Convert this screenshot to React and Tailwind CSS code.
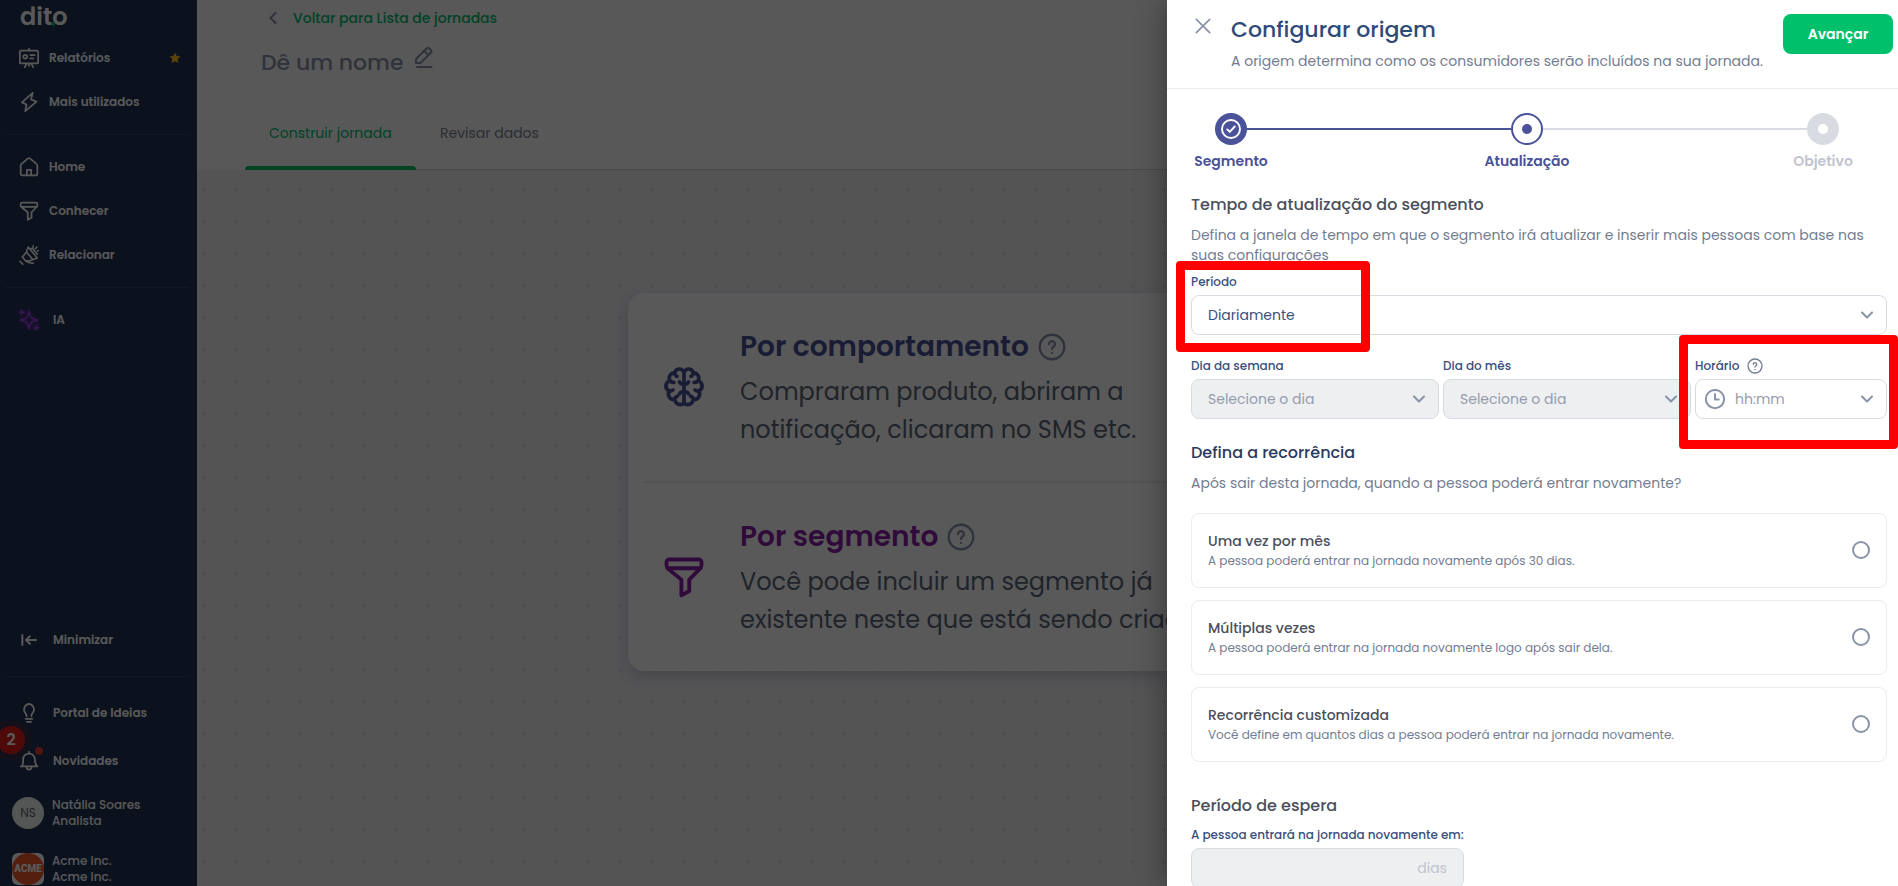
import React from 'react';
import { ChevronDown, ChevronLeft } from 'lucide-react';

const Icon = ({ children, className = 'size-5', strokeWidth = 2.1 }) => (
    <svg
        viewBox="0 0 24 24"
        className={className}
        fill="none"
        stroke="currentColor"
        strokeWidth={strokeWidth}
        strokeLinecap="round"
        strokeLinejoin="round"
        aria-hidden="true"
    >
        {children}
    </svg>
);

const BoardIcon = () => (
    <Icon>
        <rect x="1" y="3" width="22" height="15.500" rx="1.5" />
        <path d="M12 1v2M9 19l-2 4M15 19l2 4M12 19v2.500M13.500 8.500H19M13.500 12.500H17" />
        <circle cx="7.500" cy="10.500" r="2.300" />
    </Icon>
);

const BoltIcon = () => (
    <Icon>
        <path d="M16.500 1 3.500 12.500 9 15 7.500 23 21 11.500 14.500 9l2-8Z" />
    </Icon>
);

const HomeIcon = () => (
    <Icon>
        <path d="M2 10.500c0-1 .4-1.700 1.100-2.300l7.400-6.300c.9-.7 2.100-.7 3 0l7.400 6.300c.7.600 1.100 1.300 1.100 2.300V20a2 2 0 0 1-2 2H4a2 2 0 0 1-2-2v-9.500Z" />
        <path d="M9.500 21.500v-6h5v6" />
    </Icon>
);

const FunnelIcon = ({ className, strokeWidth }) => (
    <Icon className={className} strokeWidth={strokeWidth}>
        <path d="M3.500 2h17A1.500 1.500 0 0 1 22 3.500V5c0 1-.4 1.800-1.100 2.500L15 13.500V20l-4.500 2.500v-9L3.100 7.500C2.400 6.800 2 6 2 5V3.500A1.500 1.500 0 0 1 3.500 2ZM2.500 7h19" />
    </Icon>
);

const MegaphoneIcon = () => (
    <Icon strokeWidth={1.9}>
        <path d="M11 2.500 22 15.500M11 2.500 9 8.500 4 14.500 7.500 18.500l5.500.5 9-3.500M9 8.500l7.500 9M14 4.500l2-.5 6 7M1 19.500 4.500 23M8 19l3.500 2 5.500 1M17 1v1.500M19.500 4.500 21.500 2.500M22 7h1" />
    </Icon>
);

const SparkleIcon = () => (
    <Icon className="-ml-px size-[22px] text-[#9a45dd] drop-shadow-[0_0_2px_#a020f0]" strokeWidth={1.6}>
        <path d="M12 2.500c1 6.200 3 8.500 9.500 9.500-6.500 1-8.500 3.300-9.500 9.500-1-6.200-3-8.500-9.500-9.500C9 11 11 8.700 12 2.500ZM4 1v5M1.500 3.500h5M20 18v5M17.500 20.500h5" />
    </Icon>
);

const CollapseIcon = () => (
    <Icon strokeWidth={2.4}>
        <path d="M4 6v12M20.500 12H9M13 7.500 8.500 12l4.500 4.500" />
    </Icon>
);

const BulbIcon = () => (
    <Icon>
        <path d="M9 16v-1.500c0-1-.6-1.700-1.500-2.700A6.800 6.800 0 0 1 12 1a6.800 6.800 0 0 1 4.500 10.800c-.9 1-1.500 1.700-1.500 2.700V16M8 19h8M9.500 22.500h5" />
    </Icon>
);

const BellIcon = () => (
    <Icon>
        <path d="M4 17c1-1.500 1-3 1-7a7 7 0 0 1 14 0c0 4 .5 6 3 8.500H2M9 19c0 4.500 6 4.500 6 0M12 1v2" />
    </Icon>
);

const BrainIcon = () => (
    <Icon className="size-11" strokeWidth={2}>
        <path d="M12 4v16.500M12 4C11 1.500 7.500 1.500 7 4.300 4.500 4.300 3.300 6.500 4.300 8.500 1.500 9.800 1.500 12.800 3.700 14c-.8 3 .6 4.800 3.300 5 .6 2.800 4 3.300 5 1.500M7 4.300c0 1 .4 1.500 1.200 1.900M4.300 8.500c.6.800 1.300 1.100 2.200 1M3.700 14c.8.400 1.600.2 2.300-.4M7 19c0-1.200.5-1.800 1.400-2M12 10.500c-1.300 0-2.200-.5-2.500-1.300M12 14.500c-1.300 0-2.200.5-2.500 1.300" />
        <path d="M12 4c1-2.500 4.500-2.500 5 .3 2.500 0 3.700 2.200 2.700 4.200 2.800 1.300 2.800 4.300.6 5.500.8 3-.6 4.800-3.300 5-.6 2.800-4 3.300-5 1.500M17 4.300c0 1-.4 1.500-1.200 1.900M19.700 8.500c-.6.800-1.300 1.100-2.200 1M20.300 14c-.8.400-1.600.2-2.300-.4M17 19c0-1.200-.5-1.800-1.400-2M12 10.500c1.300 0 2.200-.5 2.500-1.300M12 14.500c1.300 0 2.200.5 2.500 1.300" />
    </Icon>
);

const PencilIcon = () => (
    <Icon className="size-6" strokeWidth={2}>
        <path d="M4 17v-4L14.500 2.500a2 2 0 0 1 2.800 0l1.500 1.500a2 2 0 0 1 0 2.800L8.500 17H4ZM12.500 5l3.500 3.500M5 21h14.500" />
    </Icon>
);

const HelpIcon = ({ className, strokeWidth }) => (
    <Icon className={className} strokeWidth={strokeWidth}>
        <circle cx="12" cy="12" r="10.500" />
        <path d="M9.500 9.500a2.500 2.500 0 1 1 3.900 2.100c-.9.600-1.400 1-1.400 2M12 17v.1" />
    </Icon>
);

const NavItem = ({ icon, label, className = 'h-11 gap-2.5', children }) => (
    <a href="#" className={`flex items-center pl-[19px] pr-4 ${className}`}>
        {icon}
        <span>{label}</span>
        {children}
    </a>
);

const Divider = ({ className }) => <hr className={`ml-[5px] mr-2 border-[#2f4673] ${className}`} />;

const Sidebar = () => (
    <aside className="flex w-[197px] shrink-0 flex-col bg-[#203354] text-[12px] font-semibold text-white">
        <div className="relative h-9 pl-5">
            <span className="block text-[24px] font-semibold leading-[34px]">dito</span>
            <span className="absolute left-[51px] top-[22px] size-1 rounded-full bg-[#00c06c]" />
        </div>
        <nav className="flex flex-col">
            <NavItem icon={<BoardIcon />} label="Relatórios">
                <svg viewBox="0 0 24 24" className="ml-auto size-3 fill-[#ffbf1f]" aria-hidden="true">
                    <path d="m12 1 3.300 7.200 7.700.8-5.700 5.300 1.600 7.900L12 18.300 5.100 22.200l1.600-7.900L1 9l7.700-.8L12 1Z" />
                </svg>
            </NavItem>
            <NavItem icon={<BoltIcon />} label="Mais utilizados" />
            <Divider className="my-2.5" />
            <NavItem icon={<HomeIcon />} label="Home" />
            <NavItem icon={<FunnelIcon />} label="Conhecer" />
            <NavItem icon={<MegaphoneIcon />} label="Relacionar" />
            <Divider className="my-2.5" />
            <NavItem icon={<SparkleIcon />} label="IA" className="h-11 gap-[13px]" />
        </nav>
        <div className="mt-auto">
            <NavItem icon={<CollapseIcon />} label="Minimizar" className="h-11 gap-3.5" />
            <Divider className="mb-3 mt-3.5" />
            <NavItem icon={<BulbIcon />} label="Portal de Ideias" className="h-12 gap-3.5" />
            <div className="relative">
                <NavItem icon={<BellIcon />} label="Novidades" className="h-12 gap-3.5" />
                <span className="absolute left-[35px] top-2.5 size-2 rounded-full bg-[#e23c3c]" />
                <span className="absolute -left-[3px] -top-[11px] flex size-7 items-center justify-center rounded-full bg-[#e21b1b] text-[16px] shadow-[0_0_0_6px_rgba(226,27,27,0.12)]">
                    2
                </span>
            </div>
            <div className="flex h-14 items-center gap-2 pl-3 font-medium leading-4">
                <span className="flex size-8 items-center justify-center rounded-full bg-[#f0f3f3] font-normal text-[#5a6475]">NS</span>
                <span>
                    Natália Soares
                    <br />
                    Analista
                </span>
            </div>
            <div className="flex gap-2 pb-px pl-3 pt-3 font-medium leading-4">
                <span className="size-8 rounded-md bg-white">
                    <span className="flex size-8 items-center justify-center rounded-full bg-[#f0592a] font-[Roboto,sans-serif] text-[10px] font-black">
                        ACME
                    </span>
                </span>
                <span>
                    Acme Inc.
                    <br />
                    Acme Inc.
                </span>
            </div>
        </div>
    </aside>
);

const OriginOption = ({ icon, title, titleColor, children }) => (
    <div className="flex h-[188px] items-center">
        <div className="flex w-28 shrink-0 justify-center">{icon}</div>
        <div className="whitespace-nowrap">
            <h2 className={`flex h-11 items-center gap-[9px] text-[28px] font-semibold ${titleColor}`}>
                {title}
                <HelpIcon className="size-7 text-[#8a93a8]" strokeWidth={2} />
            </h2>
            <p className="mt-1 text-[24px] leading-[38px] text-[#5c6879]">{children}</p>
        </div>
    </div>
);

const Journey = () => (
    <main className="flex min-w-0 flex-1 flex-col bg-[#fcfcfc]">
        <header className="flex h-[170px] shrink-0 flex-col pl-12">
            <a href="#" className="ml-[18px] mt-2 flex h-5 items-center gap-2.5 text-[14px] font-medium text-[#00c06c]">
                <ChevronLeft size={20} strokeWidth={2.5} className="text-[#8a93a8]" />
                Voltar para Lista de jornadas
            </a>
            <div className="ml-4 mt-[18px] flex h-8 items-center gap-2 text-[#8a93a8]">
                <h1 className="text-[22px] font-medium">Dê um nome</h1>
                <button type="button" aria-label="Editar nome" className="-mt-2">
                    <PencilIcon />
                </button>
            </div>
            <div className="mt-auto flex border-b border-[#ccd0d6] text-[14px]">
                <button type="button" className="relative h-[72px] w-[171px] px-6 text-left text-[#00c06c]">
                    Construir jornada
                    <span className="absolute inset-x-0 -bottom-px h-1 rounded-t bg-[#00c06c]" />
                </button>
                <button type="button" className="h-[72px] px-6 text-[#7b8395]">Revisar dados</button>
            </div>
        </header>
        <div className="flex-1 bg-[#efeff4] bg-[radial-gradient(circle_at_7px_20px,#d9d9de_1px,transparent_2px)] bg-[length:32px_32px]">
            <section className="ml-[431px] mt-[123px] w-[600px] rounded-2xl bg-white shadow-[0_6px_14px_rgba(60,70,110,0.2)]">
                <OriginOption icon={<span className="text-[#4a5299]"><BrainIcon /></span>} title="Por comportamento" titleColor="text-[#4a5299]">
                    Compraram produto, abriram a
                    <br />
                    notificação, clicaram no SMS etc.
                </OriginOption>
                <hr className="mx-4 border-t-2 border-[#eceef2]" />
                <OriginOption
                    icon={<FunnelIcon className="size-[42px] text-[#8a1fa8]" strokeWidth={2.2} />}
                    title="Por segmento"
                    titleColor="text-[#8a1fa8]"
                >
                    Você pode incluir um segmento já
                    <br />
                    existente neste que está sendo criado
                </OriginOption>
            </section>
        </div>
    </main>
);

const Step = ({ label, color, children }) => (
    <li className="flex w-8 shrink-0 flex-col items-center">
        {children}
        <span className={`mt-1.5 whitespace-nowrap text-[14px] font-semibold leading-5 ${color}`}>{label}</span>
    </li>
);

const Stepper = () => (
    <ol className="flex pl-12 pr-[59px] pt-6">
        <Step label="Segmento" color="text-[#4a5299]">
            <span className="flex size-8 items-center justify-center rounded-full bg-[#4a5299] text-white">
                <Icon strokeWidth={2.3}>
                    <circle cx="12" cy="12" r="10.800" />
                    <path d="m7.500 12.500 3 3 6-6.500" />
                </Icon>
            </span>
        </Step>
        <li className="mt-[15px] h-0.5 flex-1 bg-[#4a5299]" aria-hidden="true" />
        <Step label="Atualização" color="text-[#4a5299]">
            <span className="flex size-8 items-center justify-center rounded-full border-2 border-[#4a5299] bg-white">
                <span className="size-2.5 rounded-full bg-[#4a5299]" />
            </span>
        </Step>
        <li className="mt-[15px] h-0.5 flex-1 bg-[#d8dbe2]" aria-hidden="true" />
        <Step label="Objetivo" color="text-[#bfc4d0]">
            <span className="flex size-8 items-center justify-center rounded-full bg-[#d8dbe2]">
                <span className="size-2.5 rounded-full bg-white" />
            </span>
        </Step>
    </ol>
);

const FieldChevron = () => (
    <ChevronDown size={20} strokeWidth={2.5} className="pointer-events-none absolute right-2.5 top-2.5 text-[#8a93a8]" />
);

const SelectField = ({ id, label, options, disabled }) => (
    <div>
        <label htmlFor={id} className="block h-6 text-[12px] font-medium leading-[22px] text-[#3a5080]">
            {label}
        </label>
        <div className="relative">
            <select
                id={id}
                disabled={disabled}
                className="block h-10 w-full appearance-none rounded-lg border border-[#d8dbe2] bg-white px-4 text-[14px] text-[#3a5080] opacity-100 disabled:bg-[#eeeff1] disabled:text-[#959cae]"
            >
                {options.map((o) => (
                    <option key={o}>{o}</option>
                ))}
            </select>
            <FieldChevron />
        </div>
    </div>
);

const recurrences = [
    { id: 'mes', title: 'Uma vez por mês', desc: 'A pessoa poderá entrar na jornada novamente após 30 dias.' },
    { id: 'multiplas', title: 'Múltiplas vezes', desc: 'A pessoa poderá entrar na jornada novamente logo após sair dela.' },
    { id: 'custom', title: 'Recorrência customizada', desc: 'Você define em quantos dias a pessoa poderá entrar na jornada novamente.' }
];

const ConfigPanel = () => (
    <section className="absolute inset-y-0 right-0 w-[731px] overflow-hidden bg-white shadow-[0_0_28px_rgba(0,0,0,0.4)]">
        {/* Header */}
        <header className="flex h-[89px] border-b border-[#ebecee] pl-[26px] pr-[5px]">
            <button type="button" aria-label="Fechar" className="mt-4 h-5 w-[38px] text-[#8a93a8]">
                <Icon strokeWidth={2.1}>
                    <path d="m4 4 16 16M20 4 4 20" />
                </Icon>
            </button>
            <div className="pt-3">
                <h2 className="text-[22px] font-medium leading-9 text-[#2f4a78]">Configurar origem</h2>
                <p className="mt-[3px] text-[14px] leading-5 text-[#737d91]">
                    A origem determina como os consumidores serão incluídos na sua jornada.
                </p>
            </div>
            <button type="button" className="ml-auto mt-3.5 h-10 w-[110px] rounded-lg bg-[#00c06c] text-[14px] font-semibold text-white">
                Avançar
            </button>
        </header>

        <Stepper />

        <form className="pl-6 pr-[11px]">
            <h3 className="mt-[22px] text-[16px] font-medium leading-6 text-[#4b4f5c]">Tempo de atualização do segmento</h3>
            <p className="mt-2 text-[14px] leading-5 text-[#737d91]">
                Defina a janela de tempo em que o segmento irá atualizar e inserir mais pessoas com base nas
                <br />
                suas configurações
            </p>
            <div className="relative mt-1.5">
                <SelectField id="periodo" label="Período" options={['Diariamente', 'Semanalmente', 'Mensalmente']} />
                <span className="pointer-events-none absolute -left-[15px] -top-2.5 h-[91px] w-[194px] rounded border-[9px] border-[#ff0000]" />
            </div>
            <div className="mt-5 grid grid-cols-[31fr_31fr_24fr] gap-1">
                <SelectField id="semana" label="Dia da semana" options={['Selecione o dia']} disabled />
                <SelectField id="dia" label="Dia do mês" options={['Selecione o dia']} disabled />
                <div className="relative">
                    <label htmlFor="horario" className="flex h-[22px] items-center gap-2 text-[12px] font-medium text-[#3a5080]">
                        Horário
                        <HelpIcon className="size-4 text-[#737d91]" strokeWidth={2} />
                    </label>
                    <div className="relative mt-0.5">
                        <Icon className="absolute left-[9px] top-2.5 size-[22px] text-[#8a93a8]" strokeWidth={2.2}>
                            <circle cx="12" cy="11" r="10" />
                            <path d="M12 5.500V11.500h4" />
                        </Icon>
                        <input
                            id="horario"
                            placeholder="hh:mm"
                            className="block h-10 w-full rounded-lg border border-[#d8dbe2] pl-[39px] pr-8 text-[14px] placeholder:text-[#959cae]"
                        />
                        <FieldChevron />
                    </div>
                    <span className="pointer-events-none absolute -left-4 -right-[11px] -top-5 h-[114px] rounded border-[9px] border-[#ff0000]" />
                </div>
            </div>

            {/* Recurrence */}
            <fieldset>
                <legend className="pt-[22px] text-[16px] font-medium leading-6 text-[#2b3a5e]">Defina a recorrência</legend>
                <p className="mt-2 text-[14px] leading-5 text-[#737d91]">Após sair desta jornada, quando a pessoa poderá entrar novamente?</p>
                <div className="mt-5 flex flex-col gap-3">
                    {recurrences.map((r) => (
                        <label key={r.id} className="flex h-[75px] items-center justify-between rounded-lg border border-[#ebecee] px-4">
                            <span>
                                <span className="block text-[14px] font-medium leading-5 text-[#4b4f5c]">{r.title}</span>
                                <span className="block text-[12px] leading-5 text-[#737d91]">{r.desc}</span>
                            </span>
                            <input type="radio" name="recorrencia" value={r.id} className="mb-0.5 size-[18px] appearance-none rounded-full border-2 border-[#8a93a8]" />
                        </label>
                    ))}
                </div>
            </fieldset>

            <h3 className="mt-8 text-[16px] font-medium leading-6 text-[#4b4f5c]">Período de espera</h3>
            <label htmlFor="espera" className="mt-1.5 block h-6 text-[12px] font-medium leading-[22px] text-[#3a5080]">
                A pessoa entrará na jornada novamente em:
            </label>
            <input
                id="espera"
                disabled
                placeholder="dias"
                className="block h-10 w-[273px] rounded-lg border border-[#d8dbe2] bg-[#eeeff1] px-4 text-right text-[14px] placeholder:text-[#bfc4d0]"
            />
        </form>
    </section>
);

const App = () => (
    <div className="relative flex h-screen overflow-hidden font-[Poppins,Inter,sans-serif]">
        <Sidebar />
        <Journey />
        <div className="absolute inset-0 bg-black/65" />
        <ConfigPanel />
    </div>
);

export default App;
